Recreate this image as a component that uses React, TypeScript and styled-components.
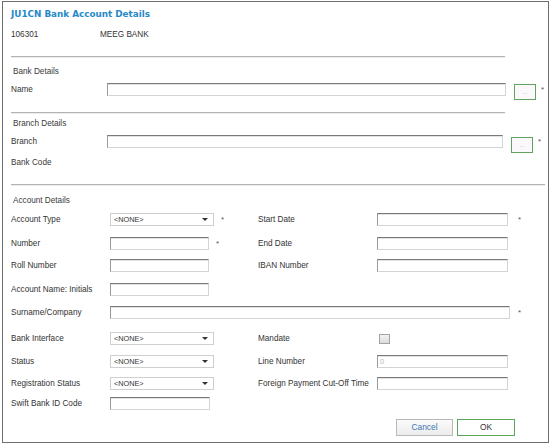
import React from "react";
import styled, { createGlobalStyle } from "styled-components";

const GlobalStyle = createGlobalStyle`
  html, body {
    margin: 0;
    padding: 0;
    background: #ffffff;
  }
  body {
    font-family: "Liberation Sans", Arial, sans-serif;
    font-size: 8.2px;
    color: #333333;
  }
`;

const Frame = styled.div`
  box-sizing: border-box;
  margin: 1px 0 0 2px;
  width: 547px;
  height: 442px;
  border: 1px solid #6e6e6e;
  padding: 6px 0 0 8px;
  display: flex;
  flex-direction: column;
`;

const Title = styled.h1`
  margin: 0;
  font-family: "DejaVu Sans", Verdana, sans-serif;
  font-weight: bold;
  font-size: 8.8px;
  line-height: 12px;
  color: #2589c8;
`;

const HeaderRow = styled.div`
  display: flex;
  margin-top: 9px;
  line-height: 12px;
`;

const HeaderCell = styled.span<{ $width?: number }>`
  width: ${(p) => (p.$width ? `${p.$width}px` : "auto")};
`;

const Separator = styled.hr<{ $width: number; $top: number }>`
  margin: ${(p) => p.$top}px 0 0 0;
  width: ${(p) => p.$width}px;
  height: 0;
  border: none;
  border-top: 1px solid #b3b3b3;
  border-bottom: 1px solid #ececec;
`;

const SectionTitle = styled.div<{ $top: number; $indent?: number }>`
  margin-top: ${(p) => p.$top}px;
  padding-left: ${(p) => p.$indent ?? 2}px;
  line-height: 12px;
  color: #3a3a3a;
`;

const LookupRow = styled.div<{ $top: number }>`
  display: flex;
  align-items: flex-start;
  margin-top: ${(p) => p.$top}px;
`;

const RowLabel = styled.span<{ $width: number }>`
  width: ${(p) => p.$width}px;
  line-height: 13px;
  flex-shrink: 0;
`;

const TextBox = styled.div<{ $width: number; $disabled?: boolean }>`
  box-sizing: border-box;
  width: ${(p) => p.$width}px;
  height: 13px;
  flex-shrink: 0;
  background: #ffffff;
  border: 1px solid #d4d4d4;
  border-top-color: #7a7a7a;
  border-left-color: #9a9a9a;
  box-shadow: inset 0 1px 0 #e2e2e2;
  font-size: 7.5px;
  line-height: 11px;
  padding-left: 2px;
  color: ${(p) => (p.$disabled ? "#b8b8b8" : "#333")};
`;

const LookupButton = styled.div<{ $offset: number }>`
  box-sizing: border-box;
  width: 22px;
  height: 16px;
  margin: ${(p) => p.$offset}px 0 0 8px;
  border: 1px solid #5fa35f;
  background: #faf8fa;
  color: #b0b0b0;
  font-size: 6px;
  line-height: 14px;
  text-align: center;
  flex-shrink: 0;
`;

const Asterisk = styled.span<{ $gap: number }>`
  margin-left: ${(p) => p.$gap}px;
  line-height: 13px;
  font-size: 8px;
  color: #555;
`;

const AccountGrid = styled.div`
  display: grid;
  margin-top: 6px;
  grid-template-columns: 99px 104px 44px 119px 131px 1fr;
  grid-template-rows: 24px 22px 24px 23px 26px 23px 22px 20px 20px;
  align-items: start;
`;

const GridLabel = styled.span<{ $col: number }>`
  grid-column: ${(p) => p.$col};
  line-height: 13px;
  white-space: nowrap;
`;

const GridField = styled.div<{ $col: string }>`
  grid-column: ${(p) => p.$col};
  display: flex;
  align-items: flex-start;
`;

const Select = styled.div`
  box-sizing: border-box;
  width: 104px;
  height: 13px;
  border: 1px solid #cfcfcf;
  background: #ffffff;
  display: flex;
  align-items: center;
  justify-content: space-between;
  padding: 0 5px 0 3px;
  font-size: 7.3px;
  color: #333;
`;

const Arrow = styled.span`
  width: 0;
  height: 0;
  border-left: 3px solid transparent;
  border-right: 3px solid transparent;
  border-top: 3px solid #333;
`;

const Checkbox = styled.div`
  box-sizing: border-box;
  width: 11px;
  height: 10px;
  margin: 2px 0 0 2px;
  border: 1px solid #a3a3a3;
  background: linear-gradient(#f2f2f2, #dcdcdc);
`;

const Footer = styled.div`
  display: flex;
  justify-content: flex-end;
  gap: 4px;
  margin-top: 2px;
  padding-right: 33px;
`;

const FooterButton = styled.div<{ $primary?: boolean }>`
  box-sizing: border-box;
  width: ${(p) => (p.$primary ? 58 : 57)}px;
  height: 17px;
  border: 1px solid ${(p) => (p.$primary ? "#5aa65a" : "#b8b8b8")};
  background: ${(p) =>
    p.$primary ? "#ffffff" : "linear-gradient(#fbfbfb, #ececec)"};
  color: ${(p) => (p.$primary ? "#333333" : "#3f74b8")};
  font-size: 8.4px;
  line-height: 15px;
  text-align: center;
`;

const SelectBox = ({ value = "<NONE>" }: { value?: string }) => (
  <Select>
    <span>{value}</span>
    <Arrow />
  </Select>
);

export default function App() {
  return (
    <>
      <GlobalStyle />
      <Frame>
        <Title>JU1CN Bank Account Details</Title>
        <HeaderRow>
          <HeaderCell $width={89}>106301</HeaderCell>
          <HeaderCell>MEEG BANK</HeaderCell>
        </HeaderRow>
        <Separator $width={494} $top={15} />

        <SectionTitle $top={8}>Bank Details</SectionTitle>
        <LookupRow $top={5}>
          <RowLabel $width={96}>Name</RowLabel>
          <TextBox $width={399} />
          <LookupButton $offset={1}>...</LookupButton>
          <Asterisk $gap={5}>*</Asterisk>
        </LookupRow>
        <Separator $width={494} $top={12} />

        <SectionTitle $top={4}>Branch Details</SectionTitle>
        <LookupRow $top={5}>
          <RowLabel $width={96}>Branch</RowLabel>
          <TextBox $width={396} />
          <LookupButton $offset={2}>...</LookupButton>
          <Asterisk $gap={5}>*</Asterisk>
        </LookupRow>
        <SectionTitle $top={4} $indent={0}>
          Bank Code
        </SectionTitle>
        <Separator $width={534} $top={15} />

        <SectionTitle $top={9}>Account Details</SectionTitle>
        <AccountGrid>
          <GridLabel $col={1}>Account Type</GridLabel>
          <GridField $col="2 / 4">
            <SelectBox />
            <Asterisk $gap={7}>*</Asterisk>
          </GridField>
          <GridLabel $col={4}>Start Date</GridLabel>
          <GridField $col="5 / 7">
            <TextBox $width={131} />
            <Asterisk $gap={10}>*</Asterisk>
          </GridField>

          <GridLabel $col={1}>Number</GridLabel>
          <GridField $col="2 / 4">
            <TextBox $width={99} />
            <Asterisk $gap={7}>*</Asterisk>
          </GridField>
          <GridLabel $col={4}>End Date</GridLabel>
          <GridField $col="5 / 7">
            <TextBox $width={131} />
          </GridField>

          <GridLabel $col={1}>Roll Number</GridLabel>
          <GridField $col="2 / 4">
            <TextBox $width={99} />
          </GridField>
          <GridLabel $col={4}>IBAN Number</GridLabel>
          <GridField $col="5 / 7">
            <TextBox $width={131} />
          </GridField>

          <GridLabel $col={1}>Account Name: Initials</GridLabel>
          <GridField $col="2 / 7">
            <TextBox $width={99} />
          </GridField>

          <GridLabel $col={1}>Surname/Company</GridLabel>
          <GridField $col="2 / 7">
            <TextBox $width={400} />
            <Asterisk $gap={8}>*</Asterisk>
          </GridField>

          <GridLabel $col={1}>Bank Interface</GridLabel>
          <GridField $col="2 / 4">
            <SelectBox />
          </GridField>
          <GridLabel $col={4}>Mandate</GridLabel>
          <GridField $col="5 / 7">
            <Checkbox />
          </GridField>

          <GridLabel $col={1}>Status</GridLabel>
          <GridField $col="2 / 4">
            <SelectBox />
          </GridField>
          <GridLabel $col={4}>Line Number</GridLabel>
          <GridField $col="5 / 7">
            <TextBox $width={131} $disabled>
              0
            </TextBox>
          </GridField>

          <GridLabel $col={1}>Registration Status</GridLabel>
          <GridField $col="2 / 4">
            <SelectBox />
          </GridField>
          <GridLabel $col={4}>Foreign Payment Cut-Off Time</GridLabel>
          <GridField $col="5 / 7">
            <TextBox $width={131} />
          </GridField>

          <GridLabel $col={1}>Swift Bank ID Code</GridLabel>
          <GridField $col="2 / 7">
            <TextBox $width={100} />
          </GridField>
        </AccountGrid>

        <Footer>
          <FooterButton>Cancel</FooterButton>
          <FooterButton $primary>OK</FooterButton>
        </Footer>
      </Frame>
    </>
  );
}
